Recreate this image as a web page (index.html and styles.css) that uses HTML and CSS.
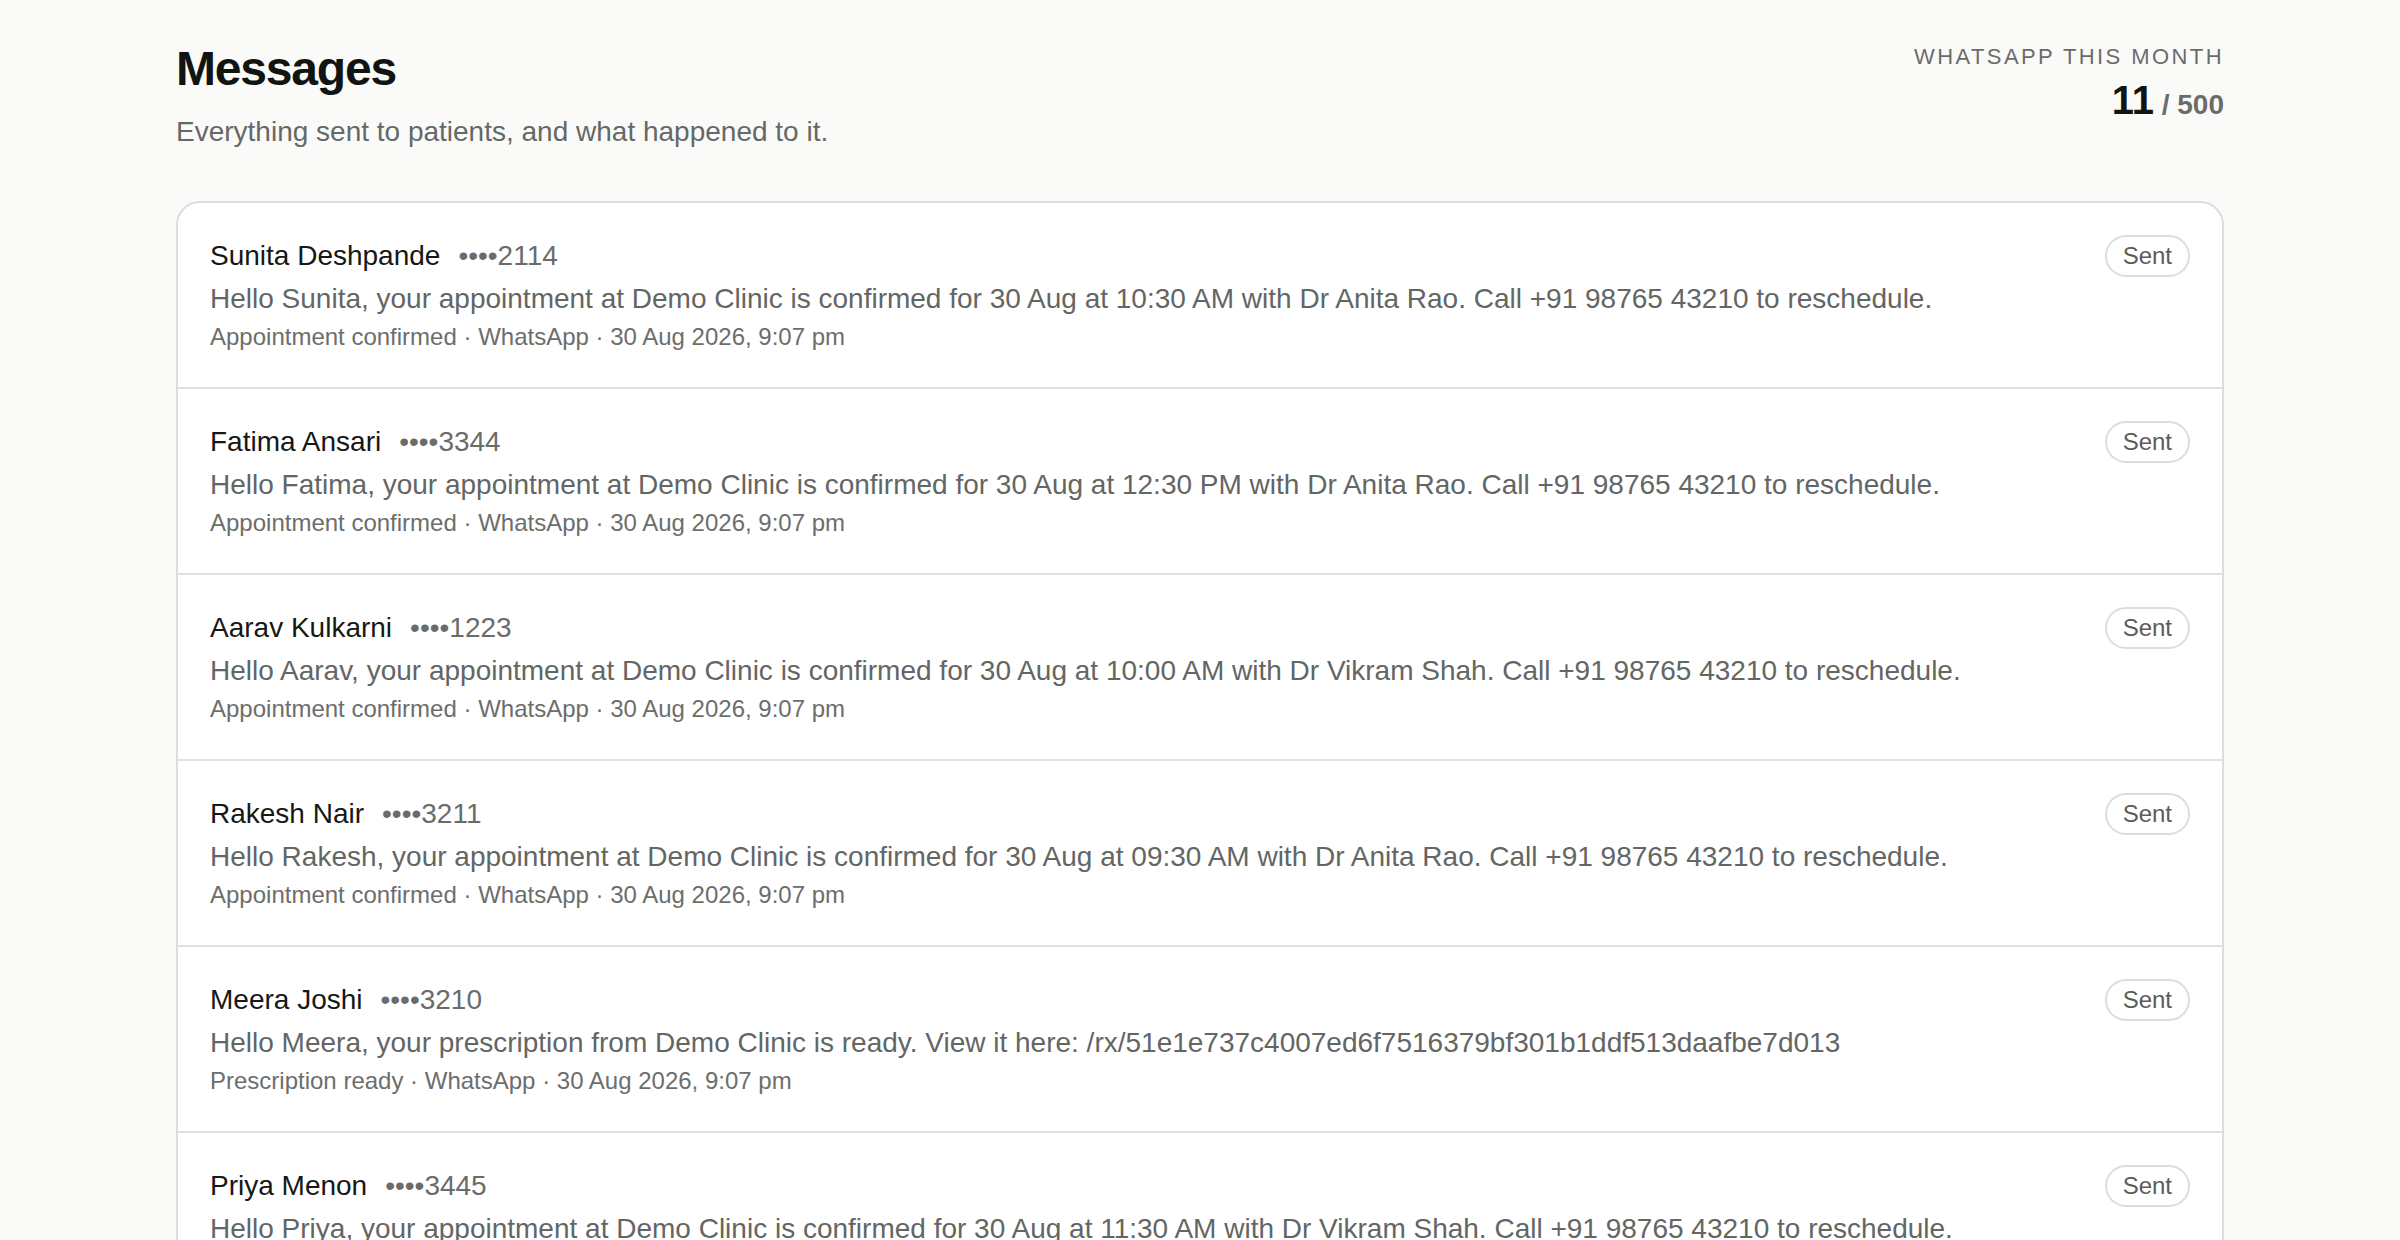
FILE: index.html
```html
<!DOCTYPE html>
<html lang="en">
<head>
<meta charset="utf-8">
<title>Messages</title>
<link rel="stylesheet" href="styles.css">
</head>
<body>
<main class="page">
  <header class="page-head">
    <div class="head-text">
      <h1 class="title">Messages</h1>
      <p class="subtitle">Everything sent to patients, and what happened to it.</p>
    </div>
    <div class="quota">
      <div class="quota-label">WhatsApp this month</div>
      <div class="quota-count"><span class="quota-used">11</span><span class="quota-limit"> / 500</span></div>
    </div>
  </header>

  <section class="message-list">
    <article class="message">
      <div class="message-top">
        <div class="who"><span class="name">Sunita Deshpande</span><span class="phone">••••2114</span></div>
        <span class="badge">Sent</span>
      </div>
      <p class="body">Hello Sunita, your appointment at Demo Clinic is confirmed for 30 Aug at 10:30 AM with Dr Anita Rao. Call +91 98765 43210 to reschedule.</p>
      <p class="meta">Appointment confirmed · WhatsApp · 30 Aug 2026, 9:07 pm</p>
    </article>
    <article class="message">
      <div class="message-top">
        <div class="who"><span class="name">Fatima Ansari</span><span class="phone">••••3344</span></div>
        <span class="badge">Sent</span>
      </div>
      <p class="body">Hello Fatima, your appointment at Demo Clinic is confirmed for 30 Aug at 12:30 PM with Dr Anita Rao. Call +91 98765 43210 to reschedule.</p>
      <p class="meta">Appointment confirmed · WhatsApp · 30 Aug 2026, 9:07 pm</p>
    </article>
    <article class="message">
      <div class="message-top">
        <div class="who"><span class="name">Aarav Kulkarni</span><span class="phone">••••1223</span></div>
        <span class="badge">Sent</span>
      </div>
      <p class="body">Hello Aarav, your appointment at Demo Clinic is confirmed for 30 Aug at 10:00 AM with Dr Vikram Shah. Call +91 98765 43210 to reschedule.</p>
      <p class="meta">Appointment confirmed · WhatsApp · 30 Aug 2026, 9:07 pm</p>
    </article>
    <article class="message">
      <div class="message-top">
        <div class="who"><span class="name">Rakesh Nair</span><span class="phone">••••3211</span></div>
        <span class="badge">Sent</span>
      </div>
      <p class="body">Hello Rakesh, your appointment at Demo Clinic is confirmed for 30 Aug at 09:30 AM with Dr Anita Rao. Call +91 98765 43210 to reschedule.</p>
      <p class="meta">Appointment confirmed · WhatsApp · 30 Aug 2026, 9:07 pm</p>
    </article>
    <article class="message">
      <div class="message-top">
        <div class="who"><span class="name">Meera Joshi</span><span class="phone">••••3210</span></div>
        <span class="badge">Sent</span>
      </div>
      <p class="body">Hello Meera, your prescription from Demo Clinic is ready. View it here: /rx/51e1e737c4007ed6f7516379bf301b1ddf513daafbe7d013</p>
      <p class="meta">Prescription ready · WhatsApp · 30 Aug 2026, 9:07 pm</p>
    </article>
    <article class="message">
      <div class="message-top">
        <div class="who"><span class="name">Priya Menon</span><span class="phone">••••3445</span></div>
        <span class="badge">Sent</span>
      </div>
      <p class="body">Hello Priya, your appointment at Demo Clinic is confirmed for 30 Aug at 11:30 AM with Dr Vikram Shah. Call +91 98765 43210 to reschedule.</p>
      <p class="meta">Appointment confirmed · WhatsApp · 30 Aug 2026, 9:07 pm</p>
    </article>
  </section>
</main>
</body>
</html>
```

FILE: styles.css
```css
* { box-sizing: border-box; }

html, body {
  margin: 0;
  padding: 0;
  background: #fafbf9;
  font-family: "Liberation Sans", Arial, sans-serif;
  color: #151715;
}

.page {
  max-width: 2048px;
  margin: 0 auto;
  padding: 40px 0 80px;
}

.page-head {
  display: flex;
  justify-content: space-between;
  align-items: flex-start;
}

.title {
  margin: 0;
  font-size: 48px;
  line-height: 58px;
  font-weight: 700;
  letter-spacing: -0.025em;
  color: #111411;
}

.subtitle {
  margin: 14px 0 0;
  font-size: 28px;
  line-height: 40px;
  color: #666866;
}

.quota {
  text-align: right;
}

.quota-label {
  font-size: 22px;
  line-height: 33px;
  letter-spacing: 0.11em;
  text-transform: uppercase;
  color: #6a6c6a;
}

.quota-count {
  margin-top: 5px;
  line-height: 44px;
  font-weight: 700;
}

.quota-used {
  font-size: 40px;
  color: #111411;
}

.quota-limit {
  font-size: 28px;
  color: #6a6c6a;
}

.message-list {
  margin-top: 49px;
  background: #ffffff;
  border: 2px solid #dcdddc;
  border-radius: 24px;
  overflow: hidden;
}

.message {
  padding: 32px;
  border-bottom: 2px solid #e0e1e0;
}

.message:last-child {
  border-bottom: 0;
}

.message-top {
  display: flex;
  justify-content: space-between;
  align-items: center;
}

.who {
  display: flex;
  align-items: baseline;
  gap: 18px;
  line-height: 42px;
}

.name {
  font-size: 28px;
  color: #161816;
}

.phone {
  font-size: 28px;
  color: #6a6c6a;
}

.badge {
  display: inline-block;
  padding: 4px 16px;
  border: 2px solid #dcdddc;
  border-radius: 999px;
  font-size: 24px;
  line-height: 30px;
  color: #5a5c5a;
}

.body {
  margin: 2px 0 0;
  font-size: 28px;
  line-height: 40px;
  color: #636663;
}

.meta {
  margin: 0;
  font-size: 24px;
  line-height: 36px;
  color: #6c6e6c;
}
```
